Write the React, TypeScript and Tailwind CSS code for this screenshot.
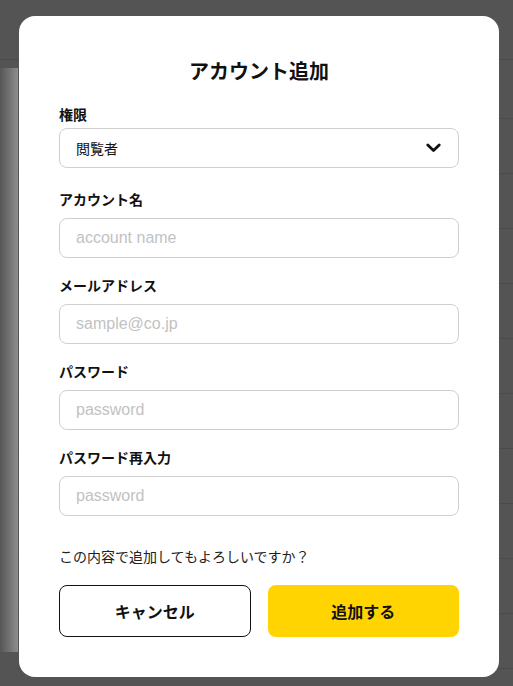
import React from 'react';

const font = { fontFamily: '"Noto Sans CJK JP", "Noto Sans", sans-serif' };

function Field({ label, placeholder, className }: { label: string; placeholder: string; className: string }) {
  return (
    <div className={className}>
      <p className="text-[14px] leading-[20px] font-bold text-[#111]">{label}</p>
      <input
        type="text"
        placeholder={placeholder}
        className="mt-[9px] block w-full h-10 rounded-[8px] border border-[#cfcfcf] px-4 text-[16px] text-[#111] outline-none placeholder:text-[#c2c2c2] font-['Liberation_Sans',sans-serif]"
      />
    </div>
  );
}

export default function App() {
  const rows = Array.from({ length: 10 });

  return (
    <div className="relative h-[686px] w-full overflow-hidden bg-[#545454]" style={font}>
      {/* page behind the overlay */}
      <div className="h-[60px] border-b border-[#4a4a4a]" />
      <div className="flex">
        <div className="mt-[8px] h-[584px] w-[18px] bg-gradient-to-r from-[#565656] to-[#8e8e8e]" />
        <div className="flex-1">
          <div className="h-[59px] border-b border-[#4b4b4b]" />
          {rows.map((_, i) => (
            <div key={i} className="h-[55px] border-b border-[#4b4b4b]" />
          ))}
        </div>
      </div>

      {/* modal */}
      <div className="absolute left-[19px] top-[16px] w-[480px] h-[661px] rounded-[16px] bg-white px-10 pt-[41px]">
        <h2 className="text-center text-[20px] leading-[28px] font-bold text-[#111]">アカウント追加</h2>

        <div className="mt-[19px]">
          <p className="text-[14px] leading-[20px] font-bold text-[#111]">権限</p>
          <div className="mt-[4px] flex h-10 items-center justify-between rounded-[8px] border border-[#cfcfcf] pl-4 pr-[17px]">
            <span className="text-[14px] text-[#111]">閲覧者</span>
            <svg width="15" height="10" viewBox="0 0 15 10" fill="none">
              <path d="M1.8 2 L7.5 7.6 L13.2 2" stroke="#111" strokeWidth="2.8" strokeLinecap="round" strokeLinejoin="round" />
            </svg>
          </div>
        </div>

        <Field className="mt-[21px]" label="アカウント名" placeholder="account name" />
        <Field className="mt-[17px]" label="メールアドレス" placeholder="sample@co.jp" />
        <Field className="mt-[17px]" label="パスワード" placeholder="password" />
        <Field className="mt-[17px]" label="パスワード再入力" placeholder="password" />

        <p className="mt-[30px] text-[14px] leading-[20px] text-[#222]">この内容で追加してもよろしいですか？</p>

        <div className="mt-[19px] grid grid-cols-2 gap-[17px]">
          <button className="h-[52px] rounded-[8px] border border-[#111] bg-white text-[16px] font-bold text-[#111]">
            キャンセル
          </button>
          <button className="h-[52px] rounded-[8px] bg-[#ffd400] text-[16px] font-bold text-[#111]">
            追加する
          </button>
        </div>
      </div>
    </div>
  );
}
